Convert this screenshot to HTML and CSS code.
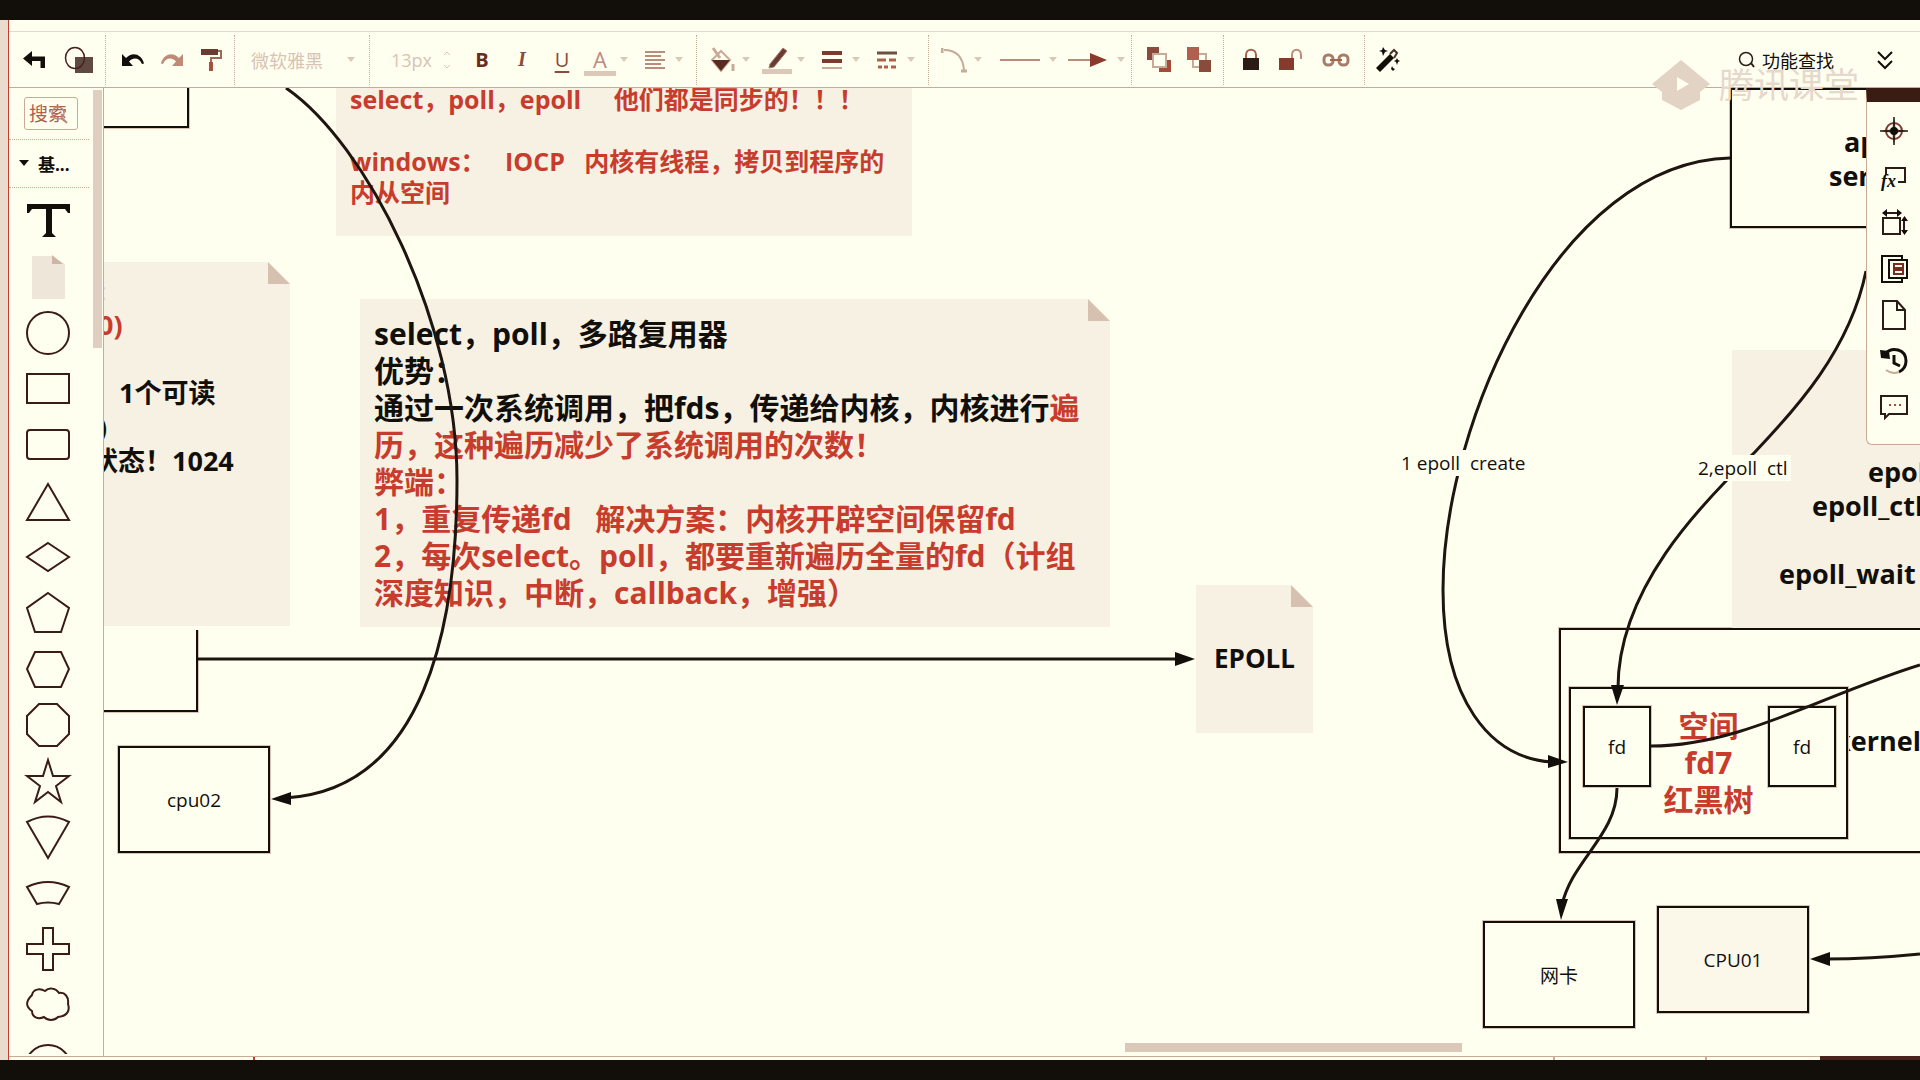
FILE: index.html
```html
<!DOCTYPE html>
<html lang="zh-CN">
<head>
<meta charset="utf-8">
<title>epoll</title>
<link rel="stylesheet" href="styles.css">
</head>
<body>
<div class="app">
  <header class="toolbar">
    <button class="tool tool-lg" aria-label="返回"><svg width="26" height="20" viewBox="0 0 26 20"><path d="M1 8.500L10 1v5.500h13V18h-4.500v-7H10v5z" fill="#120f0b"/></svg></button>
    <button class="tool tool-lg" aria-label="图形"><svg width="30" height="28" viewBox="0 0 30 28"><rect x="11" y="11" width="18" height="16" fill="#5e4a40"/><ellipse cx="11" cy="12" rx="9.500" ry="10.500" fill="none" stroke="#4a2018" stroke-width="1.500"/></svg></button>
    <span class="sep"></span>
    <button class="tool tool-sm" aria-label="撤销"><svg width="26" height="16" viewBox="0 0 26 16"><path d="M2 2v12h11l-4-4.500C13 5 19 5 22 12l2-.5C22 2 12-1 6 6z" fill="#120f0b"/></svg></button>
    <button class="tool tool-sm" aria-label="重做"><svg width="26" height="16" viewBox="0 0 26 16"><path d="M24 2v12H13l4-4.500C13 5 7 5 4 12l-2-.5C4 2 14-1 20 6z" fill="#c08a78"/></svg></button>
    <button class="tool tool-sm" aria-label="格式刷"><svg width="24" height="26" viewBox="0 0 24 26"><rect x="2" y="2" width="17" height="6" fill="#6b3a30"/><path d="M19 4h3v7H12v4" fill="none" stroke="#9a6a5a" stroke-width="2"/><rect x="10" y="15" width="4" height="9" fill="#a8503f"/></svg></button>
    <span class="sep"></span>
    <button class="select font-select">微软雅黑<i class="caret"></i></button>
    <span class="sep"></span>
    <label class="size-box"><input class="size-input" value="13px" aria-label="字号"><svg width="8" height="18" viewBox="0 0 8 18"><path d="M1 4l3-3 3 3M1 14l3 3 3-3" fill="none" stroke="#d8c3b4"/></svg></label>
    <button class="tool letter bold" aria-label="加粗">B</button>
    <button class="tool letter italic" aria-label="斜体">I</button>
    <button class="tool letter under" aria-label="下划线">U</button>
    <button class="tool split" aria-label="字体颜色"><span class="icon color-letter">A</span><i class="caret"></i></button>
    <button class="tool split" aria-label="对齐"><span class="icon"><svg width="22" height="20" viewBox="0 0 22 20"><path d="M1 2h20M1 6h16M1 10h20M1 14h16M1 18h20" stroke="#b98c7c" stroke-width="2"/></svg></span><i class="caret"></i></button>
    <span class="sep"></span>
    <button class="tool split" aria-label="填充"><span class="icon"><svg width="28" height="26" viewBox="0 0 28 26"><path d="M4 13L13 4l9 9-9 11z" fill="#fffff0" stroke="#c8aa96" stroke-width="2"/><path d="M4 13h18l-9 11z" fill="#5a2a20"/><path d="M5 1l7 10M25 17v7" stroke="#c8aa96" stroke-width="3"/></svg></span><i class="caret"></i></button>
    <button class="tool split" aria-label="线条颜色"><span class="icon"><svg width="30" height="30" viewBox="0 0 30 30"><path d="M8 19L21 3l4 3L12 22l-5 1z" fill="#6b3a30" stroke="#a87c6c"/><path d="M0 26.500h30" stroke="#dcc8b9" stroke-width="5"/></svg></span><i class="caret"></i></button>
    <button class="tool split" aria-label="线条宽度"><span class="icon"><svg width="20" height="20" viewBox="0 0 20 20"><path d="M0 3h20M0 11h20" stroke="#7a3c30" stroke-width="4"/><path d="M0 18h20" stroke="#c8aa96" stroke-width="2"/></svg></span><i class="caret"></i></button>
    <button class="tool split" aria-label="线条样式"><span class="icon"><svg width="20" height="20" viewBox="0 0 20 20"><path d="M0 3h20" stroke="#6b5044" stroke-width="3"/><path d="M0 10h9m3 0h7M1 17h4m2 0h4m3 0h5" stroke="#b0604e" stroke-width="3"/></svg></span><i class="caret"></i></button>
    <span class="sep"></span>
    <button class="tool split" aria-label="连线类型"><span class="icon"><svg width="26" height="26" viewBox="0 0 26 26"><path d="M3 3c14 0 19 8 20 20" fill="none" stroke="#c8aa96" stroke-width="2"/><path d="M1 1v5M20 24h6" stroke="#c8aa96" stroke-width="3"/></svg></span><i class="caret"></i></button>
    <button class="tool split wide" aria-label="起点"><span class="icon"><svg width="40" height="4" viewBox="0 0 40 4"><path d="M0 2h40" stroke="#b98c7c" stroke-width="2"/></svg></span><i class="caret"></i></button>
    <button class="tool split wide" aria-label="终点"><span class="icon"><svg width="40" height="14" viewBox="0 0 40 14"><path d="M0 7h24" stroke="#b98c7c" stroke-width="2"/><path d="M22 0l17 7-17 7z" fill="#8a3a2d"/></svg></span><i class="caret"></i></button>
    <span class="sep"></span>
    <button class="tool" aria-label="置于顶层"><svg width="24" height="26" viewBox="0 0 24 26"><rect width="12" height="13" fill="#8a4a3c"/><rect x="12" y="13" width="12" height="12" fill="#a84a3a"/><rect x="6" y="7" width="13" height="13" fill="#fffff0" stroke="#c8aa96" stroke-width="2"/></svg></button>
    <button class="tool" aria-label="置于底层"><svg width="24" height="26" viewBox="0 0 24 26"><rect x="6" y="7" width="13" height="13" fill="#fffff0" stroke="#c8aa96" stroke-width="2"/><rect width="12" height="13" fill="#b0604e"/><rect x="12" y="13" width="12" height="12" fill="#8a4a3c"/></svg></button>
    <span class="sep"></span>
    <button class="tool" aria-label="锁定"><svg width="18" height="24" viewBox="0 0 18 24"><path d="M4 11V7c0-7 10-7 10 0v4" fill="none" stroke="#a8604e" stroke-width="2"/><rect x="1" y="10" width="16" height="12" fill="#2c1c16"/></svg></button>
    <button class="tool" aria-label="解锁"><svg width="26" height="24" viewBox="0 0 26 24"><path d="M14 11V7c0-7 9-7 9 0v4" fill="none" stroke="#b98c7c" stroke-width="2"/><rect x="1" y="10" width="15" height="12" fill="#8a3a2d"/></svg></button>
    <button class="tool tool-link" aria-label="链接"><svg width="28" height="14" viewBox="0 0 28 14"><rect x="2" y="2" width="9" height="10" rx="4" fill="none" stroke="#a87c6c" stroke-width="3"/><rect x="17" y="2" width="9" height="10" rx="4" fill="none" stroke="#a87c6c" stroke-width="3"/><path d="M8 7h12" stroke="#a8604e" stroke-width="2"/></svg></button>
    <span class="sep"></span>
    <button class="tool tool-wand" aria-label="美化"><svg width="26" height="26" viewBox="0 0 26 26"><path d="M1 21L15 7l4 4L5 25z" fill="#120f0b"/><path d="M15 7l4-4 3 3-3 5" fill="none" stroke="#4a3028" stroke-width="2"/><path d="M8 0l2 3 3 1-3 1-2 4-1-4-3-1 3-1zM22 11l1 2 2 1-2 1-1 3-1-3-2-1 2-1zM17 19l1 2 2 1-2 2-2-2z" fill="#120f0b"/></svg></button>
    <button class="find"><svg width="18" height="18" viewBox="0 0 18 18"><circle cx="8" cy="8" r="6.500" fill="none" stroke="#2c1c16" stroke-width="1.500"/><path d="M13 12l3 4" stroke="#2c1c16" stroke-width="2"/></svg>功能查找</button>
    <button class="tool more" aria-label="展开"><svg width="16" height="20" viewBox="0 0 16 20"><path d="M1 2l7 7 7-7M1 11l7 7 7-7" fill="none" stroke="#120f0b" stroke-width="2"/></svg></button>
  </header>

  <main class="work">
    <aside class="shapes">
      <div class="search"><input class="search-input" placeholder="搜索" aria-label="搜索"><svg class="search-icon" width="18" height="20" viewBox="0 0 18 20"><circle cx="7" cy="8" r="6" fill="none" stroke="#b98c7c" stroke-width="1.500"/><path d="M11 13l5 5" stroke="#b98c7c" stroke-width="2"/></svg></div>
      <button class="category"><svg width="10" height="7" viewBox="0 0 10 7"><path d="M0 0h10L5 6z" fill="#120f0b"/></svg>基...</button>
      <div class="shape-list">
        <button class="shape" aria-label="文本"><svg viewBox="0 0 56 56"><path class="solid" d="M6 11h43v9h-2l-3-4H31v24l4 4h-14l4-4V16H11l-3 4H6z"/></svg></button>
        <button class="shape" aria-label="便签"><svg viewBox="0 0 56 56"><path fill="#efe6da" d="M11 7h20l13 8v35H11z"/><path fill="#cfb5a3" d="M31 6l11 9H31z"/></svg></button>
        <button class="shape" aria-label="圆形"><svg viewBox="0 0 56 56"><circle cx="27" cy="28" r="21"/></svg></button>
        <button class="shape" aria-label="矩形"><svg viewBox="0 0 56 56"><rect x="6" y="13" width="42" height="29"/></svg></button>
        <button class="shape" aria-label="圆角矩形"><svg viewBox="0 0 56 56"><rect x="6" y="13" width="42" height="29" rx="3"/></svg></button>
        <button class="shape" aria-label="三角形"><svg viewBox="0 0 56 56"><path d="M27 11l21 36H6z"/></svg></button>
        <button class="shape" aria-label="菱形"><svg viewBox="0 0 56 56"><path d="M27 14l21 14-21 14L6 28z"/></svg></button>
        <button class="shape" aria-label="五边形"><svg viewBox="0 0 56 56"><path d="M27 8l21 15-8 24H14L6 23z"/></svg></button>
        <button class="shape" aria-label="六边形"><svg viewBox="0 0 56 56"><path d="M14 11h26l8 17-8 18H14L6 28z"/></svg></button>
        <button class="shape" aria-label="八边形"><svg viewBox="0 0 56 56"><path d="M18 7h18l12 12v18L36 49H18L6 37V19z"/></svg></button>
        <button class="shape" aria-label="五角星"><svg viewBox="0 0 56 56"><path d="M27 7l5 16h16L35 33l5 16-13-10-13 10 5-16L6 23h16z"/></svg></button>
        <button class="shape" aria-label="扇形"><svg viewBox="0 0 56 56"><path d="M6 13Q27 2 48 13L27 49z"/></svg></button>
        <button class="shape" aria-label="弧形"><svg viewBox="0 0 56 56"><path d="M6 22Q27 12 48 22L38 39Q27 36 16 39z"/></svg></button>
        <button class="shape" aria-label="十字"><svg viewBox="0 0 56 56"><path d="M22 7h10v16h16v10H32v16H22V33H6V23h16z"/></svg></button>
        <button class="shape" aria-label="云"><svg viewBox="0 0 56 56"><path d="M11 18c1-6 8-7 13-4 4-4 11-3 14 2 6-1 10 4 9 11 2 6 0 12-10 13-4 4-10 4-14 0-6 3-12 0-12-6-7-5-6-10 0-16z"/></svg></button>
        <button class="shape" aria-label="椭圆"><svg viewBox="0 0 56 56"><circle cx="27" cy="35" r="23"/></svg></button>
      </div>
      <i class="scroll-thumb"></i>
    </aside>

    <section class="canvas">
      <div class="board">
        <div class="note note-sync">select，poll，epoll&nbsp;&nbsp;&nbsp;&nbsp; 他们都是同步的！！！<br><br>windows：&nbsp;&nbsp; IOCP&nbsp;&nbsp; 内核有线程，拷贝到程序的<br>内从空间</div>
        <div class="note folded note-state"></div>
        <div class="state-text"><span class="red">&nbsp;:<br>&nbsp;0)</span><br><br>&nbsp;&nbsp;&nbsp;&nbsp;1个可读<br>&nbsp;)<br>状态！1024</div>
        <div class="note folded note-main">select，poll，多路复用器<br>优势：<br>通过一次系统调用，把fds，传递给内核，内核进行<span class="red">遍<br>历，这种遍历减少了系统调用的次数！<br>弊端：<br>1，重复传递fd&nbsp;&nbsp; 解决方案：内核开辟空间保留fd<br>2，每次select。poll，都要重新遍历全量的fd（计组<br>深度知识，中断，callback，增强）</span></div>
        <div class="note folded note-epoll">EPOLL</div>
        <div class="node box-a"></div>
        <div class="node box-b"></div>
        <div class="node cpu02">cpu02</div>
        <div class="node app-box"></div>
        <div class="big app-text">app</div>
        <div class="big server-text">server</div>
        <div class="node kernel"></div>
        <div class="big kernel-text">kernel</div>
        <div class="note note-api"></div>
        <div class="big create-text">epoll</div>
        <div class="big ctl-text">epoll_ctl</div>
        <div class="big wait-text">epoll_wait</div>
        <div class="node tree">空间<br>fd7<br>红黑树</div>
        <div class="node fd fd-left">fd</div>
        <div class="node fd fd-right">fd</div>
        <div class="node nic">网卡</div>
        <div class="node cpu01">CPU01</div>
        <svg class="edges" width="1920" height="1080" viewBox="0 0 1920 1080">
          <g class="edge">
            <path d="M286 88C366 143 457 320 457 480C457 625 425 790 285 798"/>
            <path d="M198 659H1178"/>
            <path d="M1730 158C1560 162 1443 420 1443 590C1443 700 1490 758 1552 762"/>
            <path d="M1866 271C1850 350 1795 410 1755 452C1700 505 1617 590 1618 690"/>
            <path d="M1651 746C1740 746 1820 696 1920 665"/>
            <path d="M1617 788C1617 835 1572 860 1562 905"/>
            <path d="M1920 954Q1870 959 1826 959"/>
          </g>
          <g class="head">
            <path d="M271 799l20-7v13z"/>
            <path d="M1195 659l-20-7v14z"/>
            <path d="M1568 762l-20-7v13z"/>
            <path d="M1617 705l-6-20h13z"/>
            <path d="M1561 920l-5-21h12z"/>
            <path d="M1810 959l20-7v14z"/>
          </g>
        </svg>
        <div class="label label-create">1 epoll&nbsp; create</div>
        <div class="label label-ctl">2,epoll&nbsp; ctl</div>
      </div>
      <i class="hscroll"></i>
      <nav class="dock">
        <button class="dock-btn" aria-label="导航"><svg width="28" height="28" viewBox="0 0 28 28"><circle cx="14" cy="14" r="8" fill="none" stroke="#7a3c30" stroke-width="2"/><path d="M14 0l1 13 13 1-13 1-1 13-1-13L0 14l13-1z" fill="#2c1c16" stroke="#2c1c16"/><circle cx="14" cy="14" r="4" fill="#120f0b"/></svg></button>
        <button class="dock-btn" aria-label="公式"><svg width="28" height="28" viewBox="0 0 28 28"><path d="M6 12V5h19v14h-7" fill="none" stroke="#2c1c16" stroke-width="2"/><text x="1" y="24" class="fx">fx</text></svg></button>
        <button class="dock-btn" aria-label="尺寸"><svg width="28" height="28" viewBox="0 0 28 28"><rect x="3" y="9" width="17" height="16" fill="none" stroke="#2c1c16" stroke-width="2"/><path d="M4 4h16M24 9v15" stroke="#2c1c16" stroke-width="2"/><path d="M2 4l5-4v8zM22 4l-5-4v8zM24.500 7l-3.500 5h7zM24.500 26l-3.500-5h7z" fill="#120f0b"/></svg></button>
        <button class="dock-btn" aria-label="数据"><svg width="28" height="28" viewBox="0 0 28 28"><path d="M22 5V1H2v26h20v-4" fill="none" stroke="#120f0b" stroke-width="2"/><path d="M9 5h18v18H9z" fill="none" stroke="#120f0b" stroke-width="2"/><rect x="14" y="9" width="9" height="4" fill="none" stroke="#7a2c20" stroke-width="2"/><rect x="14" y="15" width="9" height="4" fill="none" stroke="#7a2c20" stroke-width="2"/></svg></button>
        <button class="dock-btn" aria-label="页面"><svg width="28" height="30" viewBox="0 0 28 30"><path d="M3 1h14l8 9v19H3zM17 1v9h8" fill="none" stroke="#2c1c16" stroke-width="2"/></svg></button>
        <button class="dock-btn" aria-label="历史"><svg width="28" height="28" viewBox="0 0 28 28"><path d="M5 7C12-1 26 2 26 14c0 5-3 9-7 11" fill="none" stroke="#120f0b" stroke-width="3"/><path d="M19 25c-5 2-9 1-13-2" fill="none" stroke="#c8aa96" stroke-width="2"/><path d="M0 3l9 1 1 8-9-1z" fill="#120f0b"/><path d="M14 8v8l6 3" fill="none" stroke="#120f0b" stroke-width="3"/></svg></button>
        <button class="dock-btn" aria-label="评论"><svg width="28" height="26" viewBox="0 0 28 26"><path d="M1 2h26v18H9l-4 4v-4H1z" fill="none" stroke="#2c1c16" stroke-width="2"/><path d="M9 11h2m3 0h2m3 0h2" stroke="#a84a3a" stroke-width="2"/></svg></button>
      </nav>
    </section>
  </main>
  <footer class="status"><i class="tick"></i><i class="tick"></i><i class="tick"></i><i class="status-dark"></i></footer>
  <div class="brand"><svg width="58" height="50" viewBox="0 0 58 50"><path d="M29 0L58 24 48 32v8L29 50 10 40v-8L0 24z" fill="#e2d3c5"/><path d="M25 17l12 7-12 7z" fill="#fffff0"/></svg><span>腾讯课堂</span></div>
</div>
</body>
</html>
```
FILE: styles.css
```css
:root {
  --ink: #120f0b;
  --paper: #fffff0;
  --red: #c83c2d;
  --tan: #c8aa96;
  --pale: #e6d8cb;
  --note: #f6f1e3;
}

* { box-sizing: border-box; }

body {
  margin: 0;
  background: var(--ink);
  color: var(--ink);
  font-family: "Open Sans", "Noto Sans CJK SC", sans-serif;
  text-spacing-trim: space-all;
}

button, input {
  margin: 0;
  padding: 0;
  border: 0;
  background: none;
  color: inherit;
  font: inherit;
}

.app {
  position: relative;
  display: flex;
  flex-direction: column;
  height: 100vh;
  padding-left: 9px;
  border-top: 20px solid var(--ink);
  border-bottom: 20px solid var(--ink);
  background: linear-gradient(90deg, #e9dccf 8px, var(--red) 8px, var(--red) 9px, var(--paper) 9px);
  overflow: hidden;
}

/* toolbar */
.toolbar {
  display: flex;
  flex: none;
  align-items: center;
  height: 56px;
  margin-top: 11px;
  padding-left: 4px;
  border-top: 1px solid var(--pale);
}

.sep {
  flex: none;
  height: 50px;
  margin: 0 7px 0 4px;
  border-left: 1px dotted var(--tan);
}

.tool {
  display: flex;
  flex: none;
  align-items: center;
  justify-content: center;
  width: 40px;
  height: 40px;
}

.tool-lg { width: 44px; }
.tool-sm { width: 39px; }
.tool-link { width: 49px; }
.tool-wand { width: 32px; }

.caret {
  width: 8px;
  height: 5px;
  background: #dcc8b9;
  clip-path: polygon(0 0, 100% 0, 50% 100%);
}

.split { width: 55px; justify-content: flex-start; }
.split .icon { display: flex; justify-content: center; width: 36px; margin-right: 2px; }
.split.wide { width: 68px; }
.split.wide .icon { width: 58px; margin-right: 0; }

.select, .size-box {
  display: flex;
  align-items: center;
  color: #d8c3b4;
  font-size: 18px;
}

.font-select { justify-content: space-between; width: 123px; padding: 0 10px 0 9px; }
.size-box { width: 85px; padding-left: 14px; }
.size-input { width: 52px; }

.letter { color: #8a4a3c; font-size: 20px; }
.bold { color: #6b2c20; font-weight: 700; }
.italic { font-family: "Liberation Serif", serif; font-style: italic; font-weight: 700; }
.under { text-decoration: underline; text-underline-offset: 4px; }
.split .color-letter {
  width: 32px;
  margin: 3px 4px 0 2px;
  border-bottom: 5px solid #dcc8b9;
  color: #b98c7c;
  font-size: 22px;
  line-height: 24px;
}

.find {
  display: flex;
  align-items: center;
  gap: 6px;
  margin-left: auto;
  font-size: 18px;
}
.more { width: 36px; margin: 0 17px 0 33px; }

/* shape library */
.work { display: flex; flex: 1; min-height: 0; }

.shapes {
  position: relative;
  display: flex;
  flex: none;
  flex-direction: column;
  width: 95px;
  border-top: 1px solid var(--tan);
  border-right: 1px solid var(--tan);
}

.search {
  position: relative;
  flex: none;
  width: 80px;
  padding: 9px 11px 9px 15px;
  border-bottom: 1px dotted var(--tan);
}
.search-input {
  width: 54px;
  height: 33px;
  padding-left: 4px;
  border: 1px solid var(--tan);
  border-radius: 3px;
  font-size: 19px;
}
.search-input::placeholder { color: #b0604e; opacity: 1; }
.search-icon { position: absolute; top: 17px; left: 42px; }

.category {
  display: flex;
  flex: none;
  align-items: center;
  gap: 9px;
  width: 80px;
  height: 48px;
  padding-left: 10px;
  border-bottom: 1px dotted var(--tan);
  font-size: 17px;
  font-weight: 700;
}

.shape-list { flex: 1; min-height: 0; margin-bottom: 2px; padding-top: 5px; overflow: hidden; }
.shape { display: block; width: 56px; height: 56px; margin-left: 12px; }
.shape svg { display: block; fill: none; stroke: #3a1c14; stroke-width: 2; }
.shape path[fill] { stroke: none; }
.shape .solid { fill: var(--ink); stroke: none; }

.scroll-thumb {
  position: absolute;
  top: 2px;
  right: 1px;
  width: 9px;
  height: 258px;
  background: #e0cfc0;
}

/* drawing surface */
.canvas {
  position: relative;
  flex: 1;
  min-width: 0;
  border-top: 1px solid var(--tan);
  overflow: hidden;
}

.board { position: absolute; top: -88px; left: -104px; width: 1920px; height: 1080px; }
.board > * { position: absolute; white-space: nowrap; }

.red { color: var(--red); }

.note { background: var(--note); font-weight: 700; }
.folded { clip-path: polygon(0 0, calc(100% - 22px) 0, 100% 22px, 100% 100%, 0 100%); }
.folded::after {
  content: "";
  position: absolute;
  top: 0;
  right: 0;
  width: 22px;
  height: 22px;
  background: #d6c0af;
}

.note-sync {
  top: 60px; left: 336px; width: 576px; height: 176px;
  padding: 24px 14px;
  color: var(--red);
  font-size: 25px;
  line-height: 31px;
}
.note-state { top: 262px; left: 60px; width: 230px; height: 364px; }
.state-text {
  top: 274px; left: 91px;
  font-size: 27px;
  font-weight: 700;
  line-height: 34px;
}
.note-main {
  top: 299px; left: 360px; width: 750px; height: 328px;
  padding: 16px 14px;
  font-size: 30px;
  line-height: 37px;
}
.note-epoll {
  top: 585px; left: 1196px; width: 117px; height: 148px;
  font-size: 26px;
  line-height: 146px;
  text-align: center;
}
.note-api { top: 350px; left: 1732px; width: 200px; height: 278px; }

.node {
  display: flex;
  align-items: center;
  justify-content: center;
  border: 2px solid var(--ink);
  box-shadow: 0 0 0 1px #d8c3b4;
  font-size: 19px;
}
.box-a { top: 20px; left: 60px; width: 129px; height: 108px; }
.box-b { top: 560px; left: 60px; width: 138px; height: 152px; clip-path: inset(70px -2px -2px -2px); }
.cpu02 { top: 746px; left: 118px; width: 152px; height: 107px; }
.app-box { top: 88px; left: 1730px; width: 220px; height: 140px; }
.kernel { top: 628px; left: 1559px; width: 420px; height: 225px; }
.tree {
  top: 687px; left: 1569px; width: 279px; height: 152px;
  padding-bottom: 2px;
  background: var(--paper);
  color: var(--red);
  font-size: 30px;
  font-weight: 700;
  line-height: 37px;
  text-align: center;
}
.fd { top: 706px; width: 68px; height: 81px; background: var(--paper); }
.fd-left { left: 1583px; }
.fd-right { left: 1768px; }
.nic { top: 921px; left: 1483px; width: 152px; height: 107px; }
.cpu01 { top: 906px; left: 1657px; width: 152px; height: 107px; background: #fbf8ea; }

.big { font-size: 27px; font-weight: 700; line-height: 34px; }
.app-text { top: 125px; left: 1844px; }
.server-text { top: 159px; left: 1829px; }
.create-text { top: 455px; left: 1868px; }
.ctl-text { top: 489px; left: 1812px; }
.wait-text { top: 557px; left: 1779px; }
.kernel-text { top: 724px; left: 1834px; }

.edge { fill: none; stroke: #1f1510; stroke-width: 3; }
.head { fill: var(--ink); }

.label { padding: 0 3px; background: var(--paper); font-size: 19px; line-height: 26px; }
.label-create { top: 450px; left: 1398px; }
.label-ctl { top: 455px; left: 1695px; }

.hscroll {
  position: absolute;
  bottom: 4px;
  left: 1021px;
  width: 337px;
  height: 9px;
  background: #dcc8b9;
}

.dock {
  position: absolute;
  top: 0;
  right: 0;
  display: flex;
  flex-direction: column;
  width: 54px;
  padding: 6px 0 14px;
  border: 1px solid var(--tan);
  border-top: 14px solid #3a1c14;
  border-right: 0;
  border-bottom-left-radius: 6px;
  background: var(--paper);
}
.dock-btn { display: flex; align-items: center; justify-content: center; height: 46px; }
.fx { font: italic 700 18px "Liberation Serif", serif; fill: var(--ink); }

/* bottom edge */
.status {
  display: flex;
  flex: none;
  align-items: flex-end;
  justify-content: flex-end;
  height: 4px;
  border-top: 1px solid var(--tan);
}
.tick { width: 2px; height: 3px; margin-right: 150px; background: var(--tan); }
.tick:first-child { margin-right: 1298px; background: var(--red); }
.tick:nth-child(3) { margin-right: 113px; }
.status-dark { width: 100px; height: 4px; background: #4a241b; }

.brand {
  position: absolute;
  top: 40px;
  right: 61px;
  display: flex;
  align-items: center;
  gap: 9px;
  color: #e6d8cb;
  font-size: 35px;
  line-height: 48px;
}
```
